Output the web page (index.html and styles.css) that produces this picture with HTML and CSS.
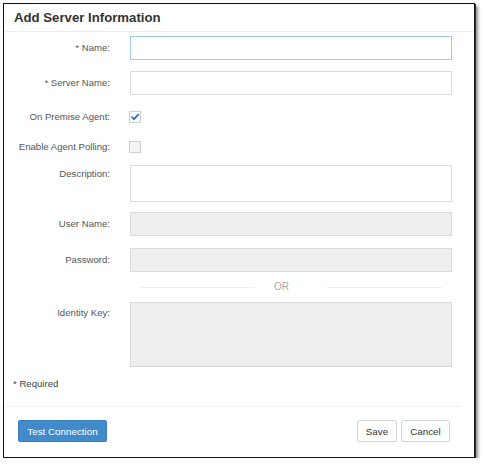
FILE: index.html
```html
<!DOCTYPE html>
<html>
<head>
<meta charset="utf-8">
<link rel="stylesheet" href="styles.css">
</head>
<body>
<div class="dialog">
  <div class="header">Add Server Information</div>
  <div class="body">
    <div class="row r-name">
      <label class="lbl">* Name:</label>
      <div class="input focus"></div>
    </div>
    <div class="row r-server">
      <label class="lbl">* Server Name:</label>
      <div class="input"></div>
    </div>
    <div class="row r-premise">
      <label class="lbl">On Premise Agent:</label>
      <div class="cb checked"><svg width="10" height="10" viewBox="0 0 10 10"><path d="M2 5.2 L4 7.2 L8.2 2.6" fill="none" stroke="#2d6fc4" stroke-width="1.8" stroke-linecap="round" stroke-linejoin="round"/></svg></div>
    </div>
    <div class="row r-poll">
      <label class="lbl">Enable Agent Polling:</label>
      <div class="cb"></div>
    </div>
    <div class="row r-desc top">
      <label class="lbl lbl-desc">Description:</label>
      <div class="input textarea"></div>
    </div>
    <div class="row r-user">
      <label class="lbl">User Name:</label>
      <div class="input disabled"></div>
    </div>
    <div class="row r-pass">
      <label class="lbl">Password:</label>
      <div class="input disabled"></div>
    </div>
    <div class="row r-or">
      <span></span>
      <div class="or"><span class="line"></span><span class="or-text">OR</span><span class="line"></span></div>
    </div>
    <div class="row r-key top">
      <label class="lbl lbl-key">Identity Key:</label>
      <div class="input disabled keyarea"></div>
    </div>
    <div class="required">* Required</div>
  </div>
  <div class="footer-line"></div>
  <div class="footer">
    <button class="btn primary">Test Connection</button>
    <div class="right">
      <button class="btn save">Save</button>
      <button class="btn cancel">Cancel</button>
    </div>
  </div>
</div>
</body>
</html>
```

FILE: styles.css
```css
html, body {
  margin: 0;
  padding: 0;
  background: #fff;
}
body {
  font-family: "Liberation Sans", Arial, sans-serif;
  color: #555;
  font-size: 9.6px;
}
.dialog {
  margin: 3px 0 0 3px;
  width: 470px;
  border: 1px solid #111;
  box-shadow: 1px 1px 0 #333, 3px 3px 3px rgba(0,0,0,0.45);
  background: #fff;
}
.header {
  height: 27px;
  line-height: 27px;
  padding-left: 10px;
  font-size: 13.2px;
  font-weight: bold;
  color: #333;
  border-bottom: 1px solid #eee;
}
.body {
  padding: 4px 0 15px 0;
}
.row {
  display: grid;
  grid-template-columns: 106px 322px;
  column-gap: 20px;
  align-items: center;
}
.row.top { align-items: start; }
.lbl {
  text-align: right;
  line-height: 14px;
  color: #555;
}
.r-server { margin-top: 11px; }
.r-premise { margin-top: 15px; height: 14px; }
.r-poll { margin-top: 16px; height: 14px; }
.r-desc { margin-top: 11px; }
.r-user { margin-top: 10px; }
.r-pass { margin-top: 12px; }
.r-or { margin-top: 8px; height: 14px; }
.r-key { margin-top: 8px; }
.lbl-desc { padding-top: 2px; }
.lbl-key { padding-top: 4px; }
.input {
  box-sizing: border-box;
  height: 24px;
  border: 1px solid #dcdcdc;
  background: #fff;
}
.input.focus {
  border-color: #a3cbee;
}
.input.textarea { height: 37px; }
.input.disabled {
  background: #eee;
  border-color: #dadada;
}
.input.keyarea { height: 65px; }
.cb {
  box-sizing: border-box;
  width: 12px;
  height: 12px;
  margin-left: -1px;
  border: 1px solid #cfcfcf;
  background: #f4f4f4;
  display: flex;
  align-items: center;
  justify-content: center;
}
.cb.checked { background: #fafafa; }
.or {
  display: flex;
  align-items: center;
  padding: 0 10px;
}
.or .line {
  flex: 1;
  height: 1px;
  background: #eee;
}
.or-text {
  padding: 0 38px 0 19px;
  font-size: 10px;
  color: #aaa;
  line-height: 14px;
}
.required {
  margin-top: 10px;
  padding-left: 9px;
  line-height: 14px;
  color: #444;
}
.footer-line {
  height: 1px;
  background: #eee;
  margin-right: 13px;
}
.footer {
  display: flex;
  justify-content: space-between;
  align-items: center;
  padding: 13px 24px 15px 14px;
}
.right {
  display: flex;
  gap: 4px;
}
.btn {
  box-sizing: border-box;
  height: 22px;
  font-family: "Liberation Sans", Arial, sans-serif;
  font-size: 9.8px;
  border-radius: 2px;
  padding: 0;
  margin: 0;
}
.btn.primary {
  width: 89px;
  background: #428bca;
  border: 1px solid #3a7fbd;
  color: #fff;
}
.btn.save, .btn.cancel {
  background: #fff;
  border: 1px solid #d4d4d4;
  color: #333;
}
.btn.save { width: 40px; }
.btn.cancel { width: 49px; }
```
